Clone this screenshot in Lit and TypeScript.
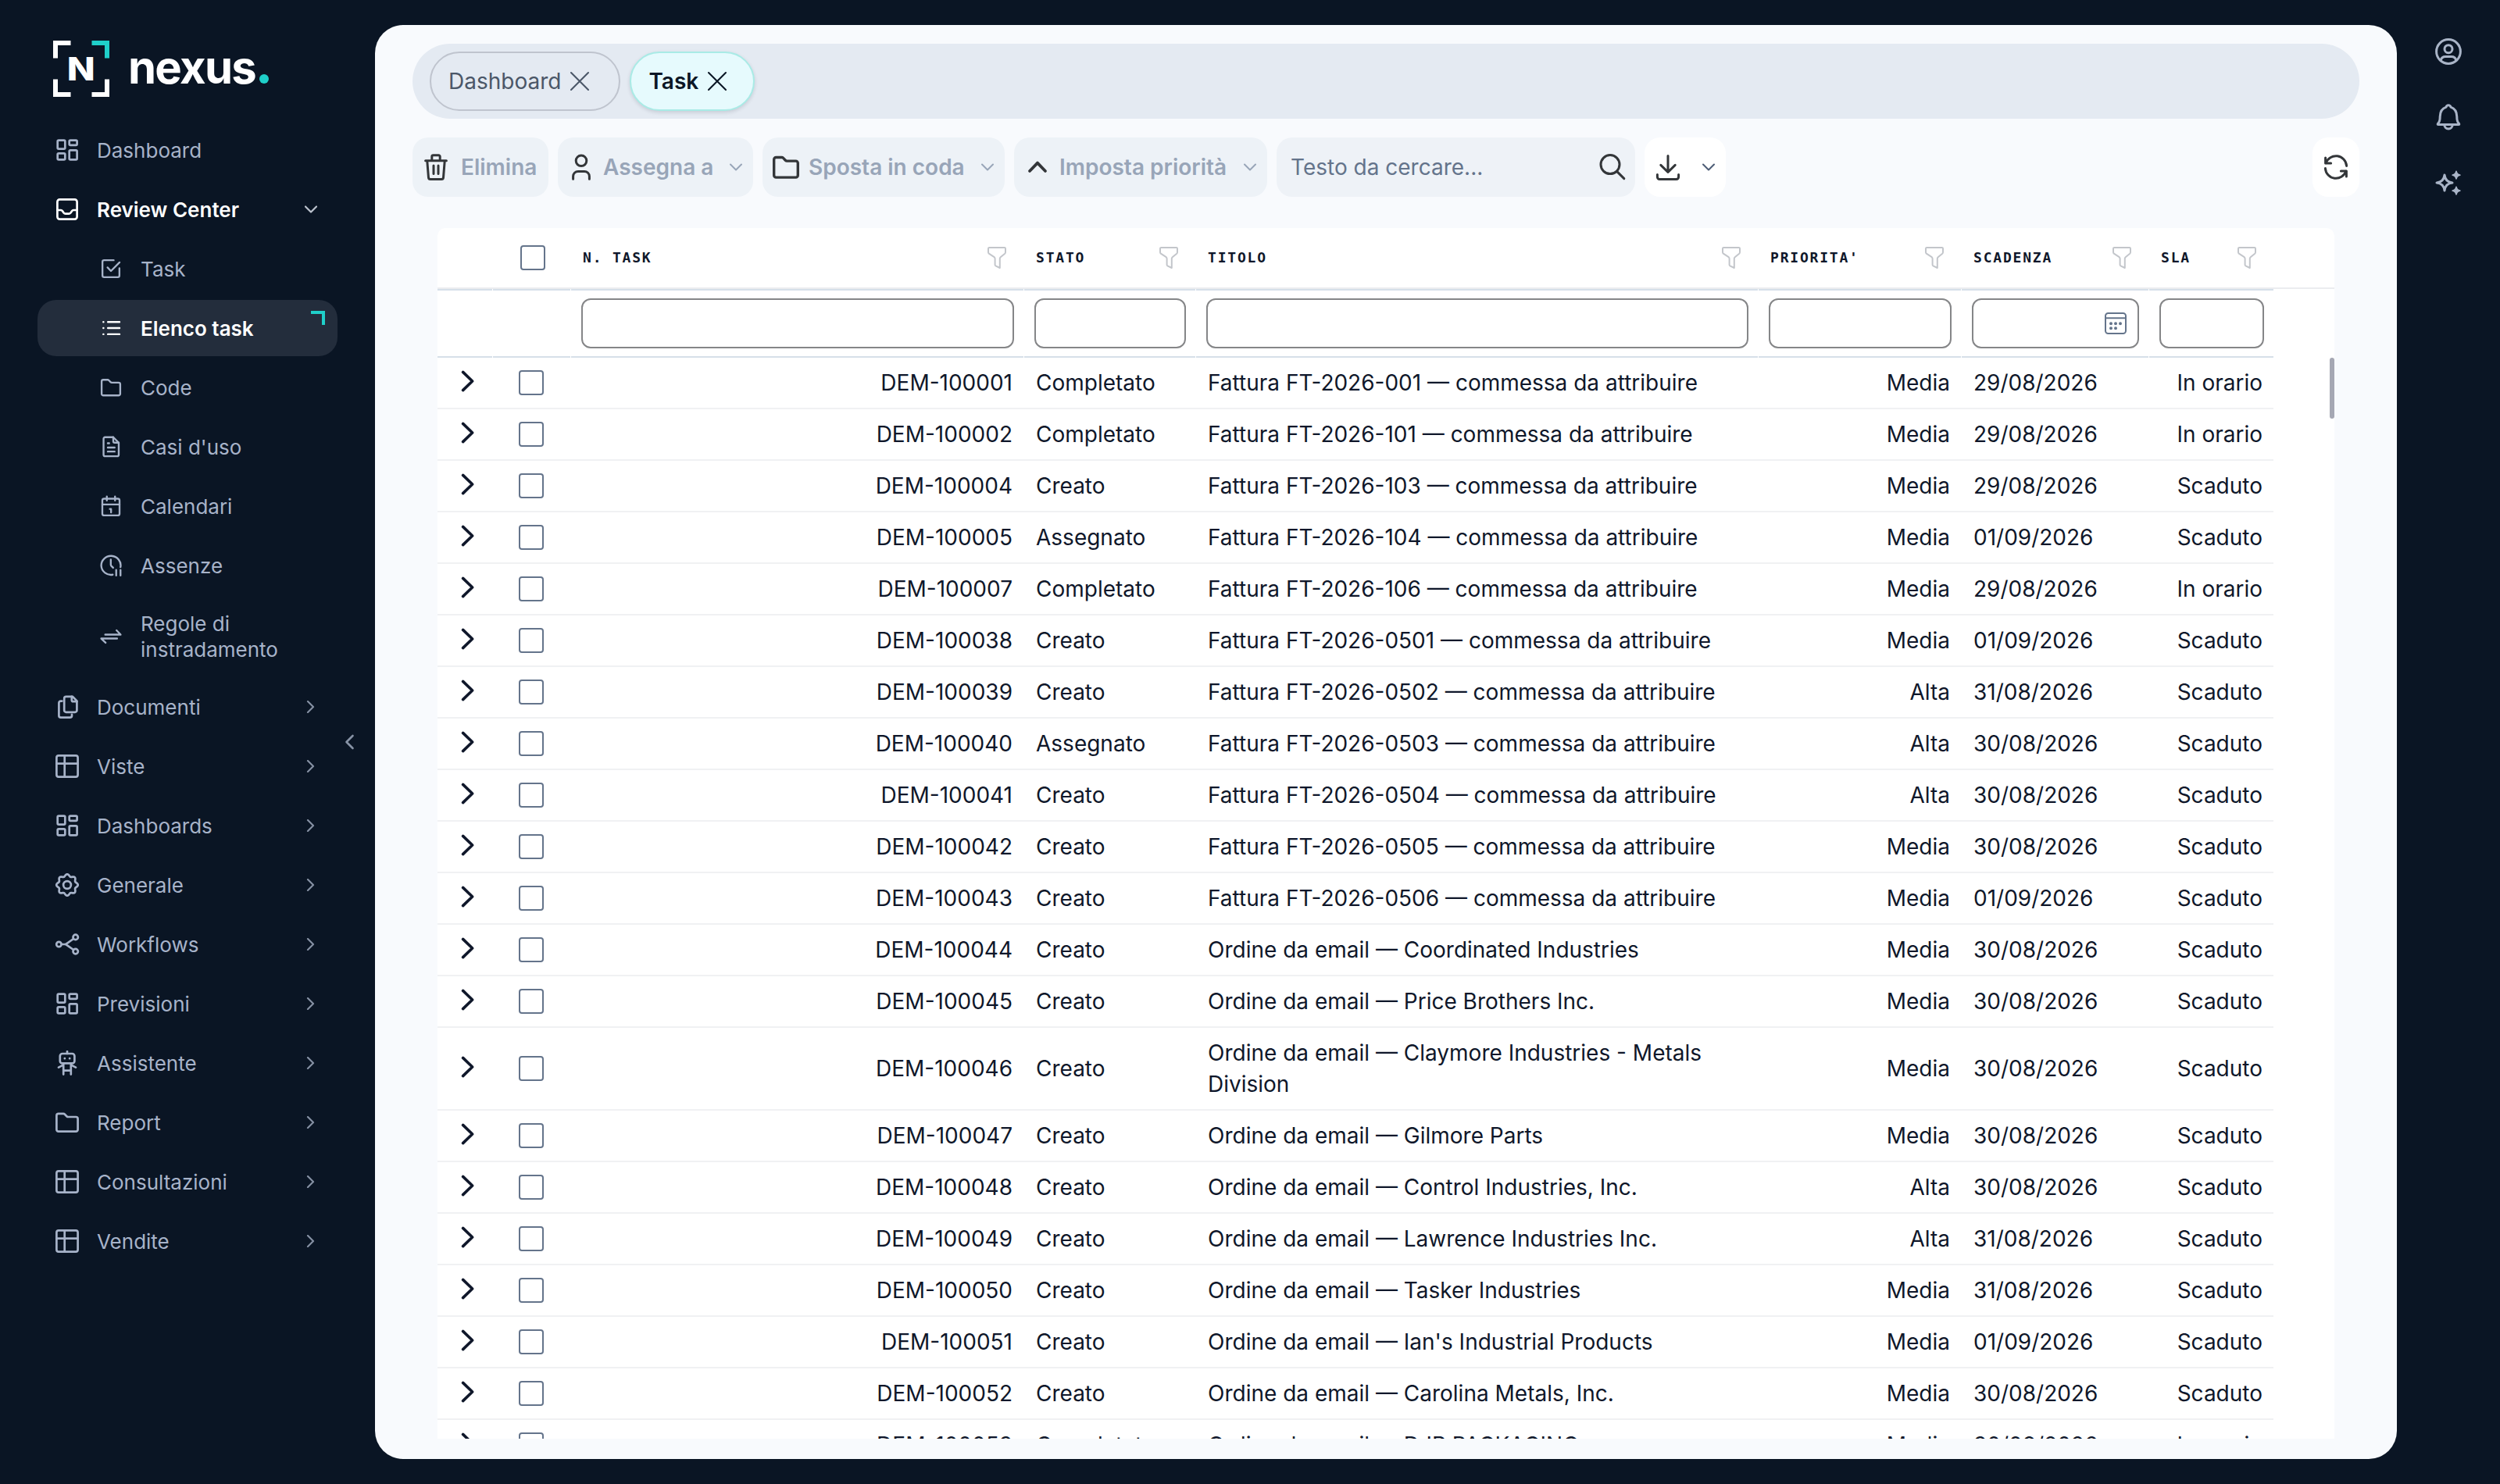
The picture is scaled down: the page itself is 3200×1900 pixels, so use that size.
import { LitElement, html, svg, css, nothing } from 'lit';
import { customElement, property, state } from 'lit/decorators.js';
import { classMap } from 'lit/directives/class-map.js';

interface NavItem {
  label: string;
  icon: string;
  children?: NavItem[];
}

interface TaskRow {
  code: string;
  status: string;
  title: string;
  priority: string;
  due: string;
  sla: string;
}

// eight soft lobes around the centre of a 32px box
const gearPath = (() => {
  const points: string[] = [];
  for (let i = 0; i < 128; i++) {
    const a = (i / 128) * Math.PI * 2;
    const r = 12.4 + 1.35 * Math.cos(8 * a);
    points.push(`${(16 + r * Math.cos(a)).toFixed(2)} ${(16 + r * Math.sin(a)).toFixed(2)}`);
  }
  return `M${points.join('L')}Z`;
})();

const ICONS = {
  grid: svg`
    <rect x="3.7" y="3.7" width="9.6" height="10.9" rx="1.4" />
    <rect x="18.7" y="3.7" width="9.9" height="6.2" rx="1.4" />
    <rect x="3.7" y="20.4" width="9.6" height="7.9" rx="1.4" />
    <rect x="18.7" y="16.4" width="9.9" height="11.9" rx="1.4" />`,
  inbox: svg`
    <rect x="3.4" y="3.4" width="25.2" height="25.2" rx="3" />
    <path d="M3.4 17H8q1.2 0 2 1.2l1.6 2.3q.9 1.2 2.2 1.2h4.4q1.3 0 2.2-1.2l1.6-2.3q.8-1.2 2-1.2h4.6" />`,
  check: svg`
    <path d="M20 3.6H6A2.4 2.4 0 0 0 3.6 6v20A2.4 2.4 0 0 0 6 28.4h20a2.4 2.4 0 0 0 2.4-2.4V15.4" />
    <path d="M11 14.2l5 5.2L28.6 6.8" />`,
  list: svg`
    <path d="M11.6 7.2h17M11.6 16h17M11.6 25h17M4.9 7.2h.2M4.9 16h.2M4.9 25h.2" />`,
  folder: svg`
    <path d="M2.4 7.3A2.4 2.4 0 0 1 4.8 4.9h6.4q1 0 1.8.8l2.4 2.5q.8.8 1.8.8h10a2.4 2.4 0 0 1 2.4 2.4v13.9a2.4 2.4 0 0 1-2.4 2.4H4.8a2.4 2.4 0 0 1-2.4-2.4z" />`,
  file: svg`
    <path d="M7.4 2h12l8 8v17.6a2.2 2.2 0 0 1-2.2 2.2H7.4a2.2 2.2 0 0 1-2.2-2.2V4.2A2.2 2.2 0 0 1 7.4 2z" />
    <path d="M19.4 2v6a2 2 0 0 0 2 2h6M11.4 10.9h2M11.4 17.2h10M11.4 23h10" />`,
  calendar: svg`
    <rect x="3.4" y="5.2" width="25.2" height="24.4" rx="2.6" />
    <path d="M3.4 13.6h25.2M10 1.8v6M22 1.8v6M14.4 20.2h1.8v5" />`,
  clock: svg`
    <path d="M30 18.4A14.2 13.8 0 1 0 18.6 29.4" />
    <path d="M15.8 7.4v7.4q0 1 .8 1.9l2.6 2.6M23.7 22.6v8M30 22.6v8" />`,
  swap: svg`
    <path d="M7.6 13.1h22.6l-6-6.2M25 18.9H1.8l6.4 6.2" />`,
  files: svg`
    <path d="M14.6 2.8h8.2l5.6 5.6v12a2.4 2.4 0 0 1-2.4 2.4H14.6a2.4 2.4 0 0 1-2.4-2.4V5.2a2.4 2.4 0 0 1 2.4-2.4z" />
    <path d="M21.8 2.8v4.4a2 2 0 0 0 2 2h4.6" />
    <path d="M9.4 8.6H7.8a2.4 2.4 0 0 0-2.4 2.4v16.2a2.4 2.4 0 0 0 2.4 2.4h11.8a2.4 2.4 0 0 0 2.4-2.4v-1.4" />`,
  table: svg`
    <rect x="2.4" y="2.4" width="27.2" height="27.2" rx="2.6" />
    <path d="M12.7 2.4v27.2M2.4 12.7h27.2" />`,
  gear: svg`
    <path d=${gearPath} />
    <circle cx="16" cy="16" r="4.9" />`,
  flow: svg`
    <circle cx="5.4" cy="16" r="3.2" />
    <circle cx="26.7" cy="6.9" r="3.2" />
    <circle cx="26.7" cy="25.1" r="3.2" />
    <path d="M8.6 16h4.6q1 0 1.8-.7L24 9M13.2 16q1 0 1.8.7L24 23" />`,
  robot: svg`
    <rect x="6.8" y="4" width="18.6" height="12.4" rx="3" />
    <path d="M16 1v3M12.8 10.2h.1M19.1 10.2h.1M11.2 17v13.6M20.8 17v13.6M11.2 25.6h9.6M11.2 18.4L5 21.6M20.8 18.4l6.2 3.2" />`,
};

const CHEVRON_RIGHT = svg`<svg class="chev" viewBox="0 0 16 16"><path d="M4 1l7 7-7 7" /></svg>`;
const CHEVRON_DOWN = svg`<svg class="chev" viewBox="0 0 16 16"><path d="M1 4.5l7 7 7-7" /></svg>`;

const NAV: NavItem[] = [
  { label: 'Dashboard', icon: 'grid' },
  {
    label: 'Review Center',
    icon: 'inbox',
    children: [
      { label: 'Task', icon: 'check' },
      { label: 'Elenco task', icon: 'list' },
      { label: 'Code', icon: 'folder' },
      { label: "Casi d'uso", icon: 'file' },
      { label: 'Calendari', icon: 'calendar' },
      { label: 'Assenze', icon: 'clock' },
      { label: 'Regole di instradamento', icon: 'swap' },
    ],
  },
  { label: 'Documenti', icon: 'files', children: [] },
  { label: 'Viste', icon: 'table', children: [] },
  { label: 'Dashboards', icon: 'grid', children: [] },
  { label: 'Generale', icon: 'gear', children: [] },
  { label: 'Workflows', icon: 'flow', children: [] },
  { label: 'Previsioni', icon: 'grid', children: [] },
  { label: 'Assistente', icon: 'robot', children: [] },
  { label: 'Report', icon: 'folder', children: [] },
  { label: 'Consultazioni', icon: 'table', children: [] },
  { label: 'Vendite', icon: 'table', children: [] },
];

const task = (n: string, status: string, title: string, priority: string, due: string, sla = 'Scaduto'): TaskRow => ({
  code: `DEM-${n}`,
  status,
  title,
  priority,
  due: `${due}/2026`,
  sla,
});
const invoice = (n: string) => `Fattura FT-2026-${n} — commessa da attribuire`;
const order = (customer: string) => `Ordine da email — ${customer}`;

const TASKS: TaskRow[] = [
  task('100001', 'Completato', invoice('001'), 'Media', '29/08', 'In orario'),
  task('100002', 'Completato', invoice('101'), 'Media', '29/08', 'In orario'),
  task('100004', 'Creato', invoice('103'), 'Media', '29/08'),
  task('100005', 'Assegnato', invoice('104'), 'Media', '01/09'),
  task('100007', 'Completato', invoice('106'), 'Media', '29/08', 'In orario'),
  task('100038', 'Creato', invoice('0501'), 'Media', '01/09'),
  task('100039', 'Creato', invoice('0502'), 'Alta', '31/08'),
  task('100040', 'Assegnato', invoice('0503'), 'Alta', '30/08'),
  task('100041', 'Creato', invoice('0504'), 'Alta', '30/08'),
  task('100042', 'Creato', invoice('0505'), 'Media', '30/08'),
  task('100043', 'Creato', invoice('0506'), 'Media', '01/09'),
  task('100044', 'Creato', order('Coordinated Industries'), 'Media', '30/08'),
  task('100045', 'Creato', order('Price Brothers Inc.'), 'Media', '30/08'),
  task('100046', 'Creato', order('Claymore Industries - Metals Division'), 'Media', '30/08'),
  task('100047', 'Creato', order('Gilmore Parts'), 'Media', '30/08'),
  task('100048', 'Creato', order('Control Industries, Inc.'), 'Alta', '30/08'),
  task('100049', 'Creato', order('Lawrence Industries Inc.'), 'Alta', '31/08'),
  task('100050', 'Creato', order('Tasker Industries'), 'Media', '31/08'),
  task('100051', 'Creato', order("Ian's Industrial Products"), 'Media', '01/09'),
  task('100052', 'Creato', order('Carolina Metals, Inc.'), 'Media', '30/08'),
  task('100053', 'Completato', order('DJR PACKAGING'), 'Media', '30/08', 'In orario'),
];

/**
 * Left navigation with one expandable section.
 */
@customElement('nexus-sidebar')
export class NexusSidebar extends LitElement {
  @property({ type: String }) active = '';
  @state() private _open = 'Review Center';

  static styles = css`
    :host {
      display: block;
      position: relative;
      box-sizing: border-box;
      width: 480px;
      padding: 52px 48px 0;
      color: #a7b3c9;
      font-size: 26px;
      line-height: 33px;
    }

    .logo {
      display: flex;
      align-items: center;
      height: 72px;
      margin: 0 0 32px 20px;
      gap: 24px;
      color: #fff;
    }

    .logo svg {
      width: 72px;
      height: 72px;
      flex: none;
    }

    .mark {
      fill: none;
      stroke: #fff;
      stroke-width: 6;
    }

    .mark.accent,
    .corner {
      stroke: #1fcfc9;
    }

    .initial {
      fill: #fff;
      font-weight: 800;
      font-size: 41px;
      text-anchor: middle;
    }

    .word {
      display: flex;
      align-items: baseline;
      padding-bottom: 3px;
      font-size: 58px;
      line-height: 69px;
      font-weight: 700;
      letter-spacing: -0.03em;
    }

    .dot {
      width: 12px;
      height: 12px;
      margin-left: 5px;
      border-radius: 50%;
      background: #1fcfc9;
    }

    nav {
      display: flex;
      flex-direction: column;
      gap: 4px;
    }

    .item {
      position: relative;
      display: flex;
      align-items: center;
      gap: 22px;
      box-sizing: border-box;
      min-height: 72px;
      padding: 17.5px 20px 17.5px 22px;
      border-radius: 24px;
    }

    .label {
      flex: 1;
    }

    .icon {
      width: 32px;
      height: 32px;
      flex: none;
      fill: none;
      stroke: currentColor;
      stroke-width: 2.7;
      stroke-linecap: round;
      stroke-linejoin: round;
    }

    .item.sub {
      padding-left: 80px;
      gap: 24px;
    }

    .item.sub .icon {
      width: 28px;
      height: 28px;
    }

    .item.open,
    .item.active {
      color: #fff;
      font-weight: 600;
    }

    .item.active {
      background: #232d3c;
    }

    .corner {
      position: absolute;
      top: 14px;
      right: 16px;
      width: 18px;
      height: 18px;
      fill: none;
      stroke-width: 4;
    }

    .chev {
      width: 16px;
      height: 16px;
      margin-right: 6px;
      fill: none;
      stroke: #8590a3;
      stroke-width: 2.2;
      stroke-linecap: round;
      stroke-linejoin: round;
    }

    .item.open .chev {
      stroke: #bcc3ce;
    }

    .collapse {
      position: absolute;
      left: 440px;
      top: 940px;
      width: 16px;
      height: 20px;
      fill: none;
      stroke: #8893a6;
      stroke-width: 2.6;
      stroke-linecap: round;
      stroke-linejoin: round;
    }
  `;

  render() {
    return html`
      <div class="logo">
        <svg viewBox="0 0 72 72">
          <path class="mark" d="M3 22.5V3h19.5M3 49.5V69h19.5M49.5 69H69V49.5" />
          <path class="mark accent" d="M49.5 3H69v19.5" />
          <text class="initial" x="35.8" y="50.7" textLength="36" lengthAdjust="spacingAndGlyphs">N</text>
        </svg>
        <div class="word">nexus<span class="dot"></span></div>
      </div>
      <nav>${NAV.map((item) => this._renderSection(item))}</nav>
      <svg class="collapse" viewBox="0 0 16 20"><path d="M11.5 2l-8 8 8 8" /></svg>
    `;
  }

  private _renderSection(item: NavItem) {
    const open = item.label === this._open;
    return html`
      <div class=${classMap({ item: true, open })} @click=${() => (this._open = item.label)}>
        <svg class="icon" viewBox="0 0 32 32">${ICONS[item.icon]}</svg>
        <span class="label">${item.label}</span>
        ${item.children ? (open ? CHEVRON_DOWN : CHEVRON_RIGHT) : nothing}
      </div>
      ${open ? item.children?.map((child) => this._renderChild(child)) : nothing}
    `;
  }

  private _renderChild(item: NavItem) {
    const active = item.label === this.active;
    return html`
      <div class=${classMap({ item: true, sub: true, active })}>
        <svg class="icon" viewBox="0 0 32 32">${ICONS[item.icon]}</svg>
        <span class="label">${item.label}</span>
        ${active ? html`<svg class="corner" viewBox="0 0 18 18"><path d="M0 2h16v16" /></svg>` : nothing}
      </div>
    `;
  }
}

/**
 * Tab strip and command buttons above the grid.
 */
@customElement('nexus-toolbar')
export class NexusToolbar extends LitElement {
  static styles = css`
    :host {
      display: block;
    }

    .tabs {
      display: flex;
      align-items: center;
      gap: 12px;
      box-sizing: border-box;
      height: 96px;
      padding: 0 22px;
      border-radius: 48px;
      background: #e4eaf2;
    }

    .tab {
      display: flex;
      align-items: center;
      gap: 11px;
      box-sizing: border-box;
      height: 76px;
      padding: 0 37px 0 22px;
      border: 2px solid #bfc4ce;
      border-radius: 38px;
      color: #4b5768;
    }

    .tab svg {
      width: 26px;
      height: 26px;
      fill: none;
      stroke: currentColor;
      stroke-width: 2.1;
      stroke-linecap: round;
    }

    .tab.current {
      padding-right: 33px;
      border-color: #a9ebe6;
      background: #e6fafd;
      color: #0b1625;
      font-weight: 600;
      box-shadow: 0 2px 5px rgba(15, 23, 42, 0.14);
    }

    .bar {
      display: flex;
      gap: 12px;
      margin-top: 24px;
    }

    .btn {
      display: flex;
      align-items: center;
      gap: 10px;
      box-sizing: border-box;
      height: 76px;
      padding: 0 14px 0 12px;
      border-radius: 20px;
      background: #edf2f7;
      color: #98a5b8;
      font-weight: 600;
      white-space: nowrap;
    }

    .delete {
      width: 174px;
      gap: 14px;
    }

    .assign {
      width: 250px;
    }

    .move {
      width: 310px;
      gap: 11px;
    }

    .priority {
      width: 324px;
    }

    .download {
      width: 104px;
    }

    .light {
      background: #fff;
    }

    .ico {
      width: 36px;
      height: 36px;
      flex: none;
      fill: none;
      stroke: #333639;
      stroke-width: 3;
      stroke-linecap: round;
      stroke-linejoin: round;
    }

    .chev {
      width: 16px;
      height: 16px;
      margin-left: auto;
      fill: none;
      stroke: #98a5b8;
      stroke-width: 2;
      stroke-linecap: round;
      stroke-linejoin: round;
    }

    .light .chev {
      stroke: #4b5b74;
    }

    .search {
      width: 459px;
      justify-content: space-between;
      padding: 0 11px 0 18px;
      background: #eef2f7;
      color: #64748b;
      font-weight: 400;
    }

    .refresh {
      margin-left: auto;
      padding: 0 12px;
    }
  `;

  render() {
    return html`
      <div class="tabs">${this._renderTab('Dashboard')}${this._renderTab('Task', true)}</div>
      <div class="bar">
        <div class="btn delete">
          <svg class="ico" viewBox="0 0 36 36">
            <path d="M4.6 9.8h26.8M12.8 9.4V4.6a1.8 1.8 0 0 1 1.8-1.8h6.8a1.8 1.8 0 0 1 1.8 1.8v4.8M6.8 10.4l1.7 21a2.4 2.4 0 0 0 2.4 2.2h14.2a2.4 2.4 0 0 0 2.4-2.2l1.7-21M15 16v10.6M21 16v10.6" />
          </svg>
          Elimina
        </div>
        <div class="btn assign">
          <svg class="ico" viewBox="0 0 36 36">
            <circle cx="18" cy="9.8" r="6.8" />
            <path d="M7.6 33.2v-3.4a6.4 6.4 0 0 1 6.4-6.4h8a6.4 6.4 0 0 1 6.4 6.4v3.4" />
          </svg>
          Assegna a ${CHEVRON_DOWN}
        </div>
        <div class="btn move">
          <svg class="ico" viewBox="0 0 32 32">${ICONS.folder}</svg>
          Sposta in coda ${CHEVRON_DOWN}
        </div>
        <div class="btn priority">
          <svg class="ico" viewBox="0 0 36 36"><path d="M8 23L18 12.6 28 23" stroke-width="3.8" /></svg>
          Imposta priorità ${CHEVRON_DOWN}
        </div>
        <div class="btn search">
          Testo da cercare...
          <svg class="ico" viewBox="0 0 36 36"><circle cx="15" cy="14.6" r="12" /><path d="M23.8 23.6l9 9" /></svg>
        </div>
        <div class="btn light download">
          <svg class="ico" viewBox="0 0 36 36">
            <path d="M18 3.6v20.6M8.8 15.4l9.2 9 9.2-9M4.4 27.6v3a2.8 2.8 0 0 0 2.8 2.8h21.6a2.8 2.8 0 0 0 2.8-2.8v-3" />
          </svg>
          ${CHEVRON_DOWN}
        </div>
        <div class="btn light refresh">
          <svg class="ico" viewBox="0 0 36 36">
            <path d="M5.2 12.8A13.6 13.6 0 0 1 31.6 16.4M30.8 23.2A13.6 13.6 0 0 1 4.4 19.6" />
            <path d="M4.6 6v7h7M31.4 30v-7h-7" />
          </svg>
        </div>
      </div>
    `;
  }

  private _renderTab(label: string, current = false) {
    return html`
      <div class=${classMap({ tab: true, current })}>
        ${label}
        <svg viewBox="0 0 26 26"><path d="M2 2l22 22M24 2L2 24" /></svg>
      </div>
    `;
  }
}

/**
 * Task list with header filters and a filter row.
 */
@customElement('task-grid')
export class TaskGrid extends LitElement {
  @property({ type: Array }) rows: TaskRow[] = [];

  static styles = css`
    :host {
      display: block;
      position: relative;
      overflow: hidden;
      border-radius: 10px 10px 0 0;
      background: #fff;
      color: #0f172a;
      line-height: 40px;
    }

    .row {
      display: grid;
      grid-template-columns: 70px 100px 580px 220px 720px 260px 240px 160px 1fr;
    }

    .cell {
      display: flex;
      align-items: center;
      box-sizing: border-box;
      min-height: 66px;
      padding: 12px 14px 12px 16px;
      border-bottom: 2px solid #f0f1f3;
    }

    .cell.right {
      justify-content: flex-end;
      text-align: right;
    }

    .cell.pick {
      padding-left: 34px;
    }

    .cell.expand {
      padding: 0 0 4px 30px;
    }

    .expand svg {
      width: 18px;
      height: 28px;
      fill: none;
      stroke: #0f172a;
      stroke-width: 3.6;
      stroke-linecap: round;
      stroke-linejoin: round;
    }

    .head {
      border-bottom: 2px solid #ebecef;
      height: 76px;
    }

    .head .cell {
      height: 80px;
      padding: 0 22px 2px 15px;
      justify-content: space-between;
      font: 700 18px/24px 'DejaVu Sans Mono', monospace;
      letter-spacing: 0.1em;
    }

    .head .cell,
    .filters .cell {
      margin-left: 1px;
      border-bottom-color: #d6dfe9;
    }

    .head .cell:first-child,
    .filters .cell:first-child {
      margin-left: 0;
    }

    .head .cell.pick {
      padding-left: 35px;
    }

    .head svg {
      width: 24px;
      height: 28px;
      flex: none;
      fill: none;
      stroke: #c3c6cb;
      stroke-width: 2;
      stroke-linejoin: round;
    }

    .filters {
      margin-top: 2px;
    }

    .filters .cell {
      height: 86px;
      padding: 0 12px 0 13px;
    }

    .field {
      display: flex;
      align-items: center;
      justify-content: flex-end;
      box-sizing: border-box;
      width: 100%;
      height: 64px;
      padding-right: 14px;
      border: 2px solid #858688;
      border-radius: 12px;
    }

    .field svg {
      width: 28px;
      height: 28px;
      fill: none;
      stroke: #64748b;
      stroke-width: 2;
    }

    .field .dots {
      stroke-width: 4;
      stroke-linecap: round;
    }

    .box {
      box-sizing: border-box;
      width: 32px;
      height: 32px;
      border: 2px solid #64748b;
      border-radius: 4px;
    }

    .thumb {
      position: absolute;
      top: 166px;
      right: 0;
      width: 6px;
      height: 78px;
      border-radius: 3px;
      background: #a5a7b3;
    }
  `;

  render() {
    const columns = ['N. TASK', 'STATO', 'TITOLO', "PRIORITA'", 'SCADENZA', 'SLA'];
    return html`
      <div class="row head">
        <div class="cell"></div>
        <div class="cell pick"><span class="box"></span></div>
        ${columns.map(
          (name) => html`
            <div class="cell">
              ${name}
              <svg viewBox="0 0 24 28">
                <path d="M2.2 1h19.6q1.2 0 1.2 1.2V7q0 1-.8 1.7l-5.5 4.5q-.9.8-.9 2V27l-5.4-2.6q-.8-.4-.8-1.3v-7.9q0-1.2-.9-2L1.8 8.7Q1 8 1 7V2.2Q1 1 2.2 1z" />
              </svg>
            </div>
          `
        )}
      </div>
      <div class="row filters">
        <div class="cell"></div>
        <div class="cell"></div>
        ${columns.map(
          (name) => html`
            <div class="cell"><div class="field">${name === 'SCADENZA' ? this._renderCalendar() : nothing}</div></div>
          `
        )}
      </div>
      ${this.rows.map((row) => this._renderRow(row))}
      <div class="thumb"></div>
    `;
  }

  private _renderCalendar() {
    return html`
      <svg viewBox="0 0 28 28">
        <rect x="1" y="1" width="26" height="26" rx="3.5" />
        <path d="M1 7.3h26" />
        <path class="dots" d="M8 14.2h.01M14 14.2h.01M20 14.2h.01M8 20.2h.01M14 20.2h.01" />
      </svg>
    `;
  }

  private _renderRow(row: TaskRow) {
    return html`
      <div class="row">
        <div class="cell expand"><svg viewBox="0 0 18 28"><path d="M2.6 2.4L14.6 14 2.6 25.6" /></svg></div>
        <div class="cell pick"><span class="box"></span></div>
        <div class="cell right">${row.code}</div>
        <div class="cell">${row.status}</div>
        <div class="cell">${row.title}</div>
        <div class="cell right">${row.priority}</div>
        <div class="cell">${row.due}</div>
        <div class="cell right">${row.sla}</div>
      </div>
    `;
  }
}

@customElement('app-root')
export class AppRoot extends LitElement {
  static styles = css`
    :host {
      display: flex;
      width: 3200px;
      height: 1900px;
      overflow: hidden;
      background: #0a1524;
      font-family: Inter, 'Liberation Sans', sans-serif;
      font-size: 28px;
    }

    main {
      display: flex;
      flex-direction: column;
      box-sizing: border-box;
      width: 2588px;
      height: 1836px;
      margin-top: 32px;
      padding: 24px 48px 26px;
      border-radius: 36px;
      background: #f8fafd;
    }

    task-grid {
      flex: 1;
      min-height: 0;
      margin: 40px 32px 0;
    }

    aside {
      display: flex;
      flex: 1;
      flex-direction: column;
      align-items: center;
      gap: 48px;
      padding-top: 48px;
    }

    aside svg {
      width: 36px;
      height: 36px;
      fill: none;
      stroke: #a9b4c7;
      stroke-width: 3;
      stroke-linecap: round;
      stroke-linejoin: round;
    }

    aside .solid {
      fill: #a9b4c7;
      stroke-width: 1.8;
    }
  `;

  render() {
    return html`
      <nexus-sidebar active="Elenco task"></nexus-sidebar>
      <main>
        <nexus-toolbar></nexus-toolbar>
        <task-grid .rows=${TASKS}></task-grid>
      </main>
      <aside>
        <svg viewBox="0 0 36 36">
          <circle cx="18" cy="18" r="15.4" />
          <circle cx="18" cy="14.7" r="5" />
          <path d="M8.2 29.2q1-4.8 6-4.8h7.6q5 0 6 4.8" />
        </svg>
        <svg viewBox="0 0 36 36">
          <path d="M18 2.8q2.4 0 3 2.4 7.6 2.6 7.8 12 0 5.4 1.6 7.6l1.2 1.6q.6 1.2-.6 1.2H5q-1.2 0-.6-1.2l1.2-1.6q1.6-2.2 1.6-7.6.2-9.4 7.8-12 .6-2.4 3-2.4z" />
          <path d="M12.8 27.8a5.2 5.2 0 0 0 10.4 0" />
        </svg>
        <svg viewBox="0 0 36 36">
          <path d="M13 8q1 9 10 10-9 1-10 10-1-9-10-10 9-1 10-10z" />
          <path class="solid" d="M28 3.500q.8 3.900 4.700 4.700-3.900.8-4.700 4.700-.8-3.900-4.700-4.700 3.900-.8 4.700-4.700zM28 23.500q.8 3.900 4.700 4.700-3.900.8-4.700 4.700-.8-3.900-4.700-4.700 3.900-.8 4.700-4.700z" />
        </svg>
      </aside>
    `;
  }
}
